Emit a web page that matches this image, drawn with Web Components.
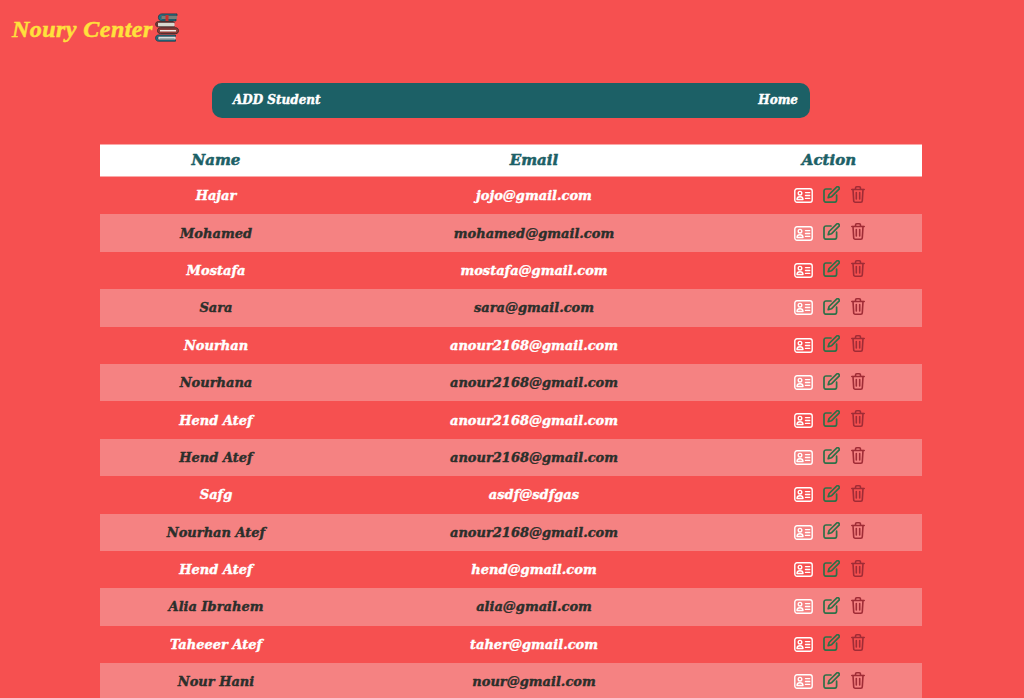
<!DOCTYPE html>
<html lang="en">
<head>
<meta charset="utf-8">
<title>Noury Center</title>
<style>
  html, body { margin: 0; background: #f65050; }
  body { font-family: "Liberation Serif", serif; height: 698px; overflow: hidden; }
</style>
</head>
<body>
<noury-brand>Noury Center</noury-brand>
<noury-nav>
  <span>ADD Student</span>
  <span slot="end">Home</span>
</noury-nav>
<student-table></student-table>

<script>
// Top left logo, text plus the stack of books
class NouryBrand extends HTMLElement {
  constructor() {
    super();
    this.attachShadow({ mode: "open" });
    this.shadowRoot.innerHTML = `
<style>
:host { display: flex; align-items: center; height: 30px; padding: 13px 0 0 12px; gap: 2px; }
.t {
  font: italic 700 24px "Liberation Serif", serif;
  color: #ffe13c;
  letter-spacing: .45px;
  -webkit-text-stroke: .5px #ffe13c;
  white-space: nowrap;
  padding-top: 3px;
}
svg { width: 24px; height: 30px; flex-shrink: 0; }
</style>
<span class="t"><slot></slot></span>
<svg viewBox="0 0 24 30">
  <path d="M20 .9H7C4.600.9 3.400 2.400 3.400 4.400S4.600 7.900 7 7.900h14V6H8.500C6.900 6 6.300 5.300 6.300 4.400S6.900 2.800 8.500 2.800H22V.9z" fill="#1f7285" stroke="#1c3b48" stroke-width=".8"/>
  <rect x="6.500" y="2.800" width="15.500" height="3.200" fill="#7a7f78"/>
  <rect x="10.500" y="2" width="3" height="6" fill="#c9302c"/>
  <path d="M18 8.500H3.400C1.600 8.500.6 9.700.6 11.200s1 2.700 2.800 2.700H18c1 0 1.600-.5 1.600-.5H4c-1.200 0-1.600-.8-1.600-1.900S2.800 9.900 4 9.900h15.600z" fill="#7d3a36" stroke="#3a2a2a" stroke-width=".8"/>
  <rect x="3" y="9.800" width="16.500" height="3.500" fill="#d8d8cf"/>
  <path d="M21 14.800H5.500c-2 0-3 1.300-3 2.900s1 2.900 3 2.900H21c1.500 0 2.500-1.300 2.500-2.900s-1-2.900-2.500-2.900z" fill="#8f3d38" stroke="#3a2a2a" stroke-width=".9"/>
  <rect x="5" y="17" width="16" height="1.500" fill="#efe9e4"/>
  <path d="M20.500 22H3.400c-1.800 0-2.800 1.400-2.800 3.100s1 3.100 2.800 3.100h17.100v-1.700H4.500c-1.200 0-1.700-.6-1.700-1.400s.5-1.400 1.700-1.400h16z" fill="#1f7285" stroke="#1c3b48" stroke-width=".8"/>
  <rect x="3.500" y="23.700" width="17" height="2.800" fill="#d9dcdc"/>
  <rect x="4.500" y="25.400" width="15" height=".8" fill="#7b8a8c"/>
</svg>`;
  }
}

class NouryNav extends HTMLElement {
  constructor() {
    super();
    this.attachShadow({ mode: "open" });
    this.shadowRoot.innerHTML = `
<style>
:host {
  display: flex;
  justify-content: space-between;
  align-items: center;
  box-sizing: border-box;
  width: 598px;
  height: 35px;
  margin: 40px 0 0 212px;
  padding: 0 12px 1px 21px;
  background: #1c6066;
  border-radius: 10px;
  color: #fff;
  font: italic 700 12px "DejaVu Serif", serif;
  -webkit-text-stroke: .4px #fff;
}
</style>
<slot></slot><slot name="end"></slot>`;
  }
}

// The three action icons of a row
class RowActions extends HTMLElement {
  constructor() {
    super();
    this.attachShadow({ mode: "open" });
    this.shadowRoot.innerHTML = `
<style>
:host { display: flex; align-items: center; justify-content: center; gap: 10px; margin-left: 1px; }
svg { display: block; fill: none; stroke-linecap: round; stroke-linejoin: round; }
.card { stroke: #fff; stroke-width: 1.4; }
.edit { stroke: #2e7048; stroke-width: 1.7; margin-top: -3px; }
.trash { stroke: #a02c36; stroke-width: 1.6; margin: -3px 0 0 1px; }
</style>
<svg class="card" width="19" height="15" viewBox="0 0 19 15">
  <rect x=".8" y=".8" width="17.400" height="13.400" rx="2.200"/>
  <circle cx="6" cy="5.200" r="1.800"/>
  <path d="M3 11.500c0-1.800 1.300-2.700 3-2.700s3 .9 3 2.700z"/>
  <path d="M11.500 4.600h4.200M11.500 7.500h4.200M11.500 10.400h4.200"/>
</svg>
<svg class="edit" width="17" height="17" viewBox="0 0 17 17">
  <path d="M8 3H3a2 2 0 0 0-2 2v9.200a2 2 0 0 0 2 2h8.600a2 2 0 0 0 2-2V9.200"/>
  <path d="M13.600 1.200a1.500 1.500 0 0 1 2.200 2.200L8.400 10.800l-3.200.9.900-3.200z"/>
</svg>
<svg class="trash" width="14" height="17" viewBox="0 0 14 17">
  <path d="M.8 3.500h12.400"/>
  <path d="M4.500 3.300V2a1.200 1.200 0 0 1 1.200-1.200h2.600A1.200 1.200 0 0 1 9.500 2v1.300"/>
  <path d="M2 3.500l.7 11.200a1.500 1.500 0 0 0 1.500 1.500h5.600a1.500 1.500 0 0 0 1.500-1.500L12 3.500"/>
  <path d="M5.300 6.500v6.500M8.700 6.500v6.500"/>
</svg>`;
  }
}

class StudentRow extends HTMLElement {
  connectedCallback() { this._render(); }
  _render() {
    if (!this.shadowRoot) this.attachShadow({ mode: "open" });
    this.shadowRoot.innerHTML = `
<style>
:host {
  display: grid;
  grid-template-columns: 232px 404px 186px;
  align-items: center;
  height: 37.4px;
  text-align: center;
  font: italic 700 13px "DejaVu Serif", serif;
  color: #fff;
  -webkit-text-stroke: .4px currentColor;
}
:host([striped]) { background: #f58282; color: #2c2f2b; }
</style>
<div>${this.getAttribute("name")}</div>
<div>${this.getAttribute("email")}</div>
<row-actions></row-actions>`;
  }
}

const STUDENTS = [
  ["Hajar", "jojo@gmail.com"],
  ["Mohamed", "mohamed@gmail.com"],
  ["Mostafa", "mostafa@gmail.com"],
  ["Sara", "sara@gmail.com"],
  ["Nourhan", "anour2168@gmail.com"],
  ["Nourhana", "anour2168@gmail.com"],
  ["Hend Atef", "anour2168@gmail.com"],
  ["Hend Atef", "anour2168@gmail.com"],
  ["Safg", "asdf@sdfgas"],
  ["Nourhan Atef", "anour2168@gmail.com"],
  ["Hend Atef", "hend@gmail.com"],
  ["Alia Ibrahem", "alia@gmail.com"],
  ["Taheeer Atef", "taher@gmail.com"],
  ["Nour Hani", "nour@gmail.com"],
];

class StudentTable extends HTMLElement {
  constructor() {
    super();
    this.attachShadow({ mode: "open" });
    const rows = STUDENTS.map(([n, e], i) =>
      `<student-row name="${n}" email="${e}"${i % 2 ? " striped" : ""}></student-row>`).join("");
    this.shadowRoot.innerHTML = `
<style>
:host { display: block; width: 822px; margin: 26px 0 0 100px; }
.head {
  display: grid;
  grid-template-columns: 232px 404px 186px;
  align-items: center;
  box-sizing: border-box;
  height: 33px;
  padding-bottom: 1px;
  background: #fff;
  border-top: 1px solid #fba8a8;
  border-bottom: 1px solid #fba8a8;
  text-align: center;
  color: #1c6066;
  font: italic 700 15px "DejaVu Serif", serif;
  -webkit-text-stroke: .5px #1c6066;
}
</style>
<div class="head"><div>Name</div><div>Email</div><div>Action</div></div>
${rows}`;
  }
}

customElements.define("noury-brand", NouryBrand);
customElements.define("noury-nav", NouryNav);
customElements.define("row-actions", RowActions);
customElements.define("student-row", StudentRow);
customElements.define("student-table", StudentTable);
</script>
</body>
</html>
